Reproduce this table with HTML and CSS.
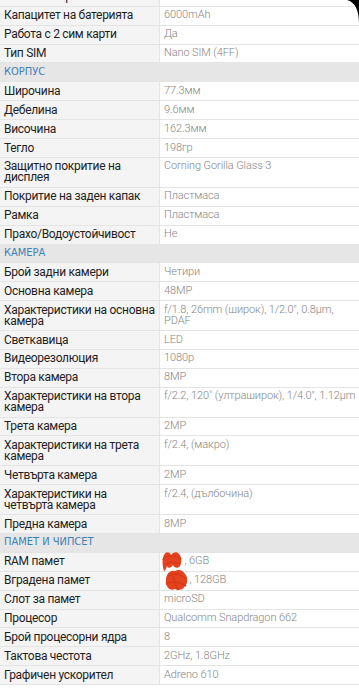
FILE: index.html
```html
<!DOCTYPE html>
<html lang="bg">
<head>
<meta charset="utf-8">
<title>Спецификации</title>
<link rel="stylesheet" href="styles.css">
</head>
<body>
<div class="specs">
  <div class="row cut"><div class="k">Тип на батерията</div><div class="v">Li-Po</div></div>
  <div class="row"><div class="k">Капацитет на батерията</div><div class="v">6000mAh</div></div>
  <div class="row"><div class="k">Работа с 2 сим карти</div><div class="v">Да</div></div>
  <div class="row"><div class="k">Тип SIM</div><div class="v">Nano SIM (4FF)</div></div>
  <div class="row head"><div class="h">Корпус</div></div>
  <div class="row"><div class="k">Широчина</div><div class="v">77.3мм</div></div>
  <div class="row"><div class="k">Дебелина</div><div class="v">9.6мм</div></div>
  <div class="row"><div class="k">Височина</div><div class="v">162.3мм</div></div>
  <div class="row"><div class="k">Тегло</div><div class="v">198гр</div></div>
  <div class="row"><div class="k">Защитно покритие на дисплея</div><div class="v">Corning Gorilla Glass 3</div></div>
  <div class="row"><div class="k">Покритие на заден капак</div><div class="v">Пластмаса</div></div>
  <div class="row"><div class="k">Рамка</div><div class="v">Пластмаса</div></div>
  <div class="row"><div class="k">Прахо/Водоустойчивост</div><div class="v">Не</div></div>
  <div class="row head"><div class="h">Камера</div></div>
  <div class="row"><div class="k">Брой задни камери</div><div class="v">Четири</div></div>
  <div class="row"><div class="k">Основна камера</div><div class="v">48MP</div></div>
  <div class="row"><div class="k">Характеристики на основна камера</div><div class="v">f/1.8, 26mm (широк), 1/2.0", 0.8µm,<br>PDAF</div></div>
  <div class="row"><div class="k">Светкавица</div><div class="v">LED</div></div>
  <div class="row"><div class="k">Видеорезолюция</div><div class="v">1080p</div></div>
  <div class="row"><div class="k">Втора камера</div><div class="v">8MP</div></div>
  <div class="row"><div class="k">Характеристики на втора камера</div><div class="v">f/2.2, 120˚ (ултраширок), 1/4.0", 1.12µm</div></div>
  <div class="row"><div class="k">Трета камера</div><div class="v">2MP</div></div>
  <div class="row"><div class="k">Характеристики на трета камера</div><div class="v">f/2.4, (макро)</div></div>
  <div class="row"><div class="k">Четвърта камера</div><div class="v">2MP</div></div>
  <div class="row"><div class="k">Характеристики на четвърта камера</div><div class="v">f/2.4, (дълбочина)</div></div>
  <div class="row"><div class="k">Предна камера</div><div class="v">8MP</div></div>
  <div class="row head"><div class="h">Памет и чипсет</div></div>
  <div class="row"><div class="k">RAM памет</div><div class="v"><span class="hidden hidden-ram"></span>, 6GB<svg class="scribble scribble-ram" viewBox="0 0 22 21"><path d="M3 20 C1 14 1 8 3 4 C5 0 9 1 10 4 C12 1 16 0 18 3 C21 6 21 12 19 15 C17 18 13 17 12 14 C10 17 7 18 6 15 C5 18 4 20 3 20 Z" fill="#e5431f"/><path d="M2 9 C6 3 14 4 20 8 M4 14 C9 10 14 11 19 13" stroke="#d93a18" stroke-width="1.6" fill="none"/></svg></div></div>
  <div class="row"><div class="k">Вградена памет</div><div class="v"><span class="hidden hidden-rom"></span>, 128GB<svg class="scribble scribble-rom" viewBox="0 0 25 24"><path d="M2 12 C2 6 6 2 11 3 C14 1 19 2 21 6 C24 9 24 15 21 18 C19 22 14 23 11 21 C8 23 4 21 3 18 C1 16 2 14 2 12 Z" fill="#e5431f"/><path d="M4 8 C10 4 17 6 22 11 M3 16 C9 12 15 14 22 18 M8 4 C9 10 12 16 14 22" stroke="#d93a18" stroke-width="1.6" fill="none"/></svg></div></div>
  <div class="row"><div class="k">Слот за памет</div><div class="v">microSD</div></div>
  <div class="row"><div class="k">Процесор</div><div class="v">Qualcomm Snapdragon 662</div></div>
  <div class="row"><div class="k">Брой процесорни ядра</div><div class="v">8</div></div>
  <div class="row"><div class="k">Тактова честота</div><div class="v">2GHz, 1.8GHz</div></div>
  <div class="row"><div class="k">Графичен ускорител</div><div class="v">Adreno 610</div></div>
</div>
<svg class="corner" viewBox="0 0 12 24"><path d="M0 0 H12 V24 C12 10 8 2 0 0 Z" fill="#000"/></svg>
</body>
</html>
```
FILE: styles.css
```css
html, body {
  margin: 0;
  padding: 0;
  background: #fff;
}
body {
  font-family: Roboto, "Noto Sans", sans-serif;
  overflow: hidden;
}
.specs {
  display: flex;
  flex-direction: column;
}
.row {
  display: grid;
  grid-template-columns: 160px 1fr;
  border-bottom: 1px solid #e4e4e4;
}
.row.cut {
  margin-top: -12.2px;
}
.k {
  background: #f4f4f4;
  border-right: 1px solid #e4e4e4;
  padding: 3.5px 1px 3.5px 4px;
  line-height: 10.9px;
  font-size: 12px;
  letter-spacing: -0.3px;
  color: #1e1e1e;
}
.v {
  position: relative;
  padding: 3.5px 2px 3.5px 4px;
  line-height: 10.9px;
  font-size: 11px;
  letter-spacing: -0.1px;
  color: #858585;
  font-weight: 300;
}
.row.head {
  display: block;
  background: #e6e6e6;
}
.h {
  padding: 3.5px 4px;
  line-height: 10.9px;
  font-size: 11px;
  text-transform: uppercase;
  color: #3d80b4;
  font-family: "Liberation Sans Narrow", "DejaVu Sans Condensed", Roboto, sans-serif;
}
.hidden {
  display: inline-block;
}
.hidden-ram { width: 20.5px; }
.hidden-rom { width: 25.5px; }
.scribble {
  position: absolute;
}
.scribble-ram {
  left: 1px;
  top: -2px;
  width: 22px;
  height: 21px;
}
.scribble-rom {
  left: 4px;
  top: -4px;
  width: 25px;
  height: 24px;
}
.corner {
  position: fixed;
  top: 0;
  right: 0;
  width: 12px;
  height: 24px;
}
```
